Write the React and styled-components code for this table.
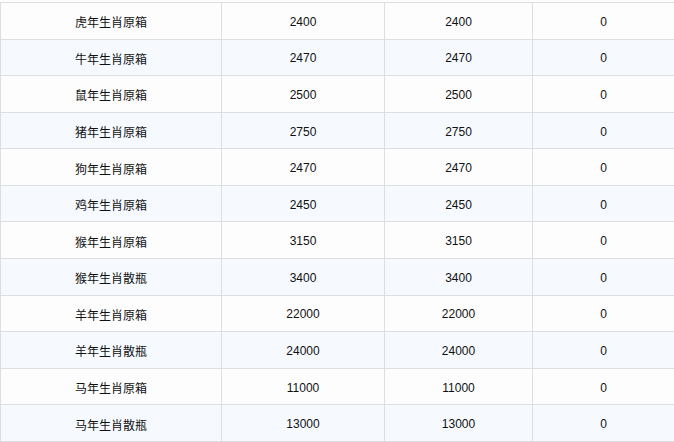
import React from 'react';
import styled, { createGlobalStyle } from 'styled-components';

const GlobalStyle = createGlobalStyle`
  html, body {
    margin: 0;
    padding: 0;
    background: #fdfdfd;
    font-family: 'Liberation Sans', 'Noto Sans CJK SC', sans-serif;
  }
`;

const Wrapper = styled.div`
  width: 674px;
  height: 442px;
  overflow: hidden;
  padding-top: 2px;
  box-sizing: border-box;
  background: #fdfdfd;
`;

const Table = styled.div`
  border-top: 1px solid #dcdee2;
  border-left: 1px solid #dcdee2;
  width: 674px;
  box-sizing: border-box;
`;

const Row = styled.div`
  display: grid;
  grid-template-columns: 221px 163px 148px 1fr;
  height: 36.58px;
  box-sizing: border-box;
  border-bottom: 1px solid #dcdee2;
  background: ${p => (p.$striped ? '#f6faff' : '#fdfdfd')};
`;

const Cell = styled.div`
  display: flex;
  align-items: center;
  justify-content: center;
  padding-top: 2px;
  font-size: 12px;
  color: #111;
  border-right: ${p => (p.$last ? 'none' : '1px solid #dcdee2')};
`;

const rows = [
  ['虎年生肖原箱', 2400, 2400, 0],
  ['牛年生肖原箱', 2470, 2470, 0],
  ['鼠年生肖原箱', 2500, 2500, 0],
  ['猪年生肖原箱', 2750, 2750, 0],
  ['狗年生肖原箱', 2470, 2470, 0],
  ['鸡年生肖原箱', 2450, 2450, 0],
  ['猴年生肖原箱', 3150, 3150, 0],
  ['猴年生肖散瓶', 3400, 3400, 0],
  ['羊年生肖原箱', 22000, 22000, 0],
  ['羊年生肖散瓶', 24000, 24000, 0],
  ['马年生肖原箱', 11000, 11000, 0],
  ['马年生肖散瓶', 13000, 13000, 0],
];

export default function App() {
  return (
    <>
      <GlobalStyle />
      <Wrapper>
        <Table>
          {rows.map((r, i) => (
            <Row key={i} $striped={i % 2 === 1}>
              {r.map((v, j) => (
                <Cell key={j} $last={j === r.length - 1}>{v}</Cell>
              ))}
            </Row>
          ))}
        </Table>
      </Wrapper>
    </>
  );
}
